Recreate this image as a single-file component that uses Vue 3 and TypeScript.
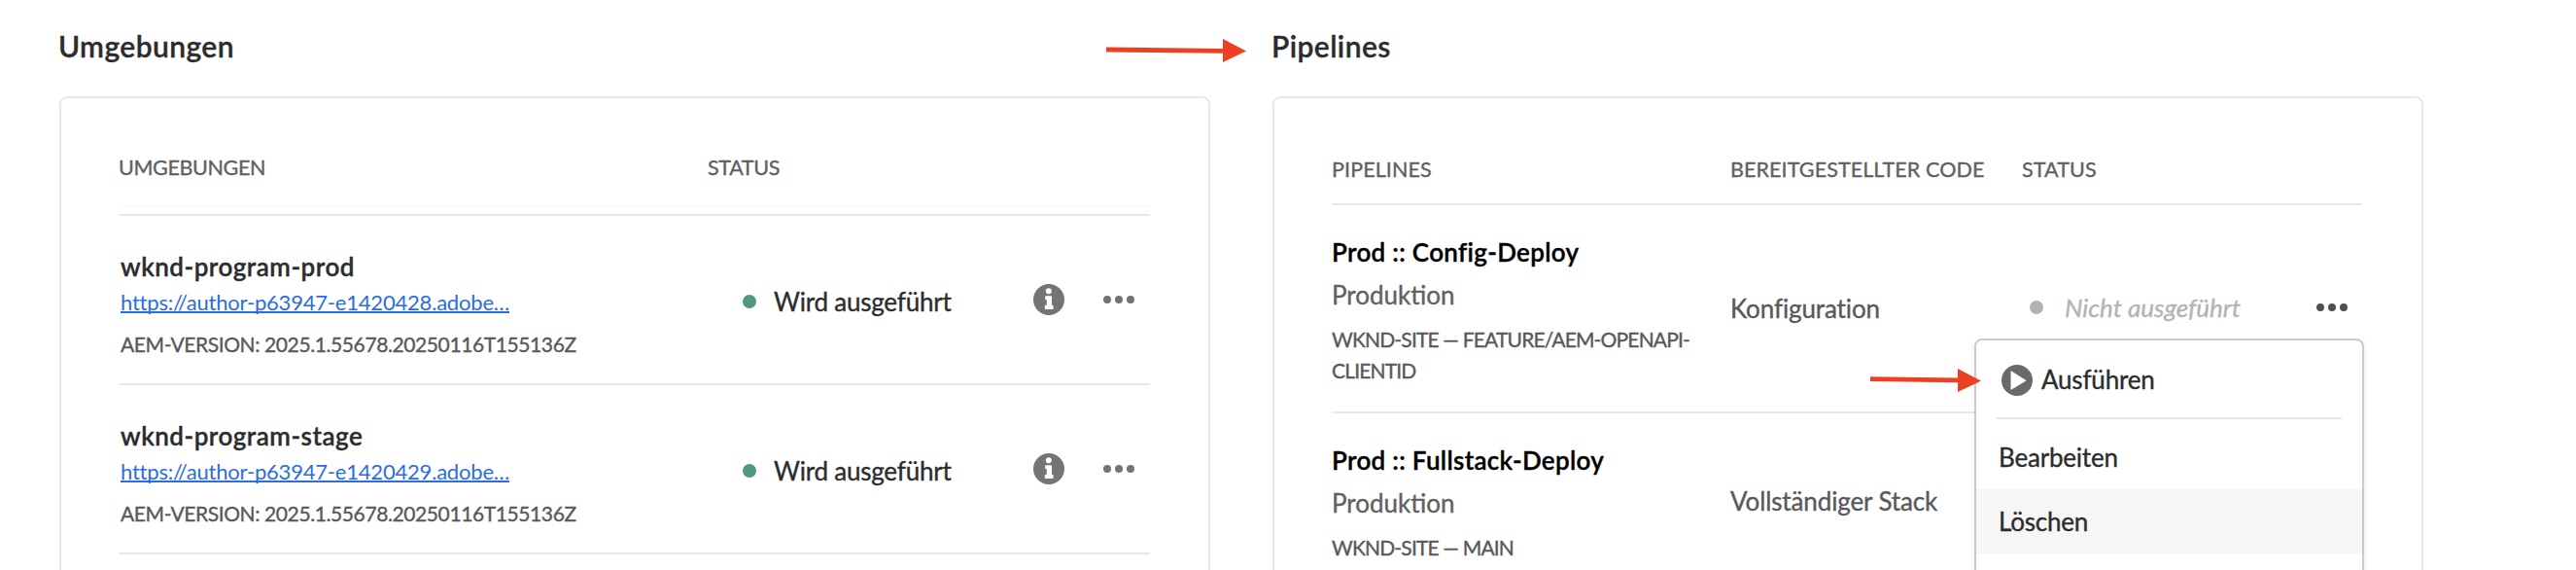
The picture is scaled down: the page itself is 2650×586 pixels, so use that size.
<script setup lang="ts">
interface Environment {
  name: string
  url: string
  version: string
  status: string
}

interface Pipeline {
  name: string
  kind: string
  branch: string
  code: string
  status: string
  menuOpen: boolean
}

const environments: Environment[] = [
  {
    name: 'wknd-program-prod',
    url: 'https://author-p63947-e1420428.adobe…',
    version: 'AEM-VERSION: 2025.1.55678.20250116T155136Z',
    status: 'Wird ausgeführt',
  },
  {
    name: 'wknd-program-stage',
    url: 'https://author-p63947-e1420429.adobe…',
    version: 'AEM-VERSION: 2025.1.55678.20250116T155136Z',
    status: 'Wird ausgeführt',
  },
]

const pipelines: Pipeline[] = [
  {
    name: 'Prod :: Config-Deploy',
    kind: 'Produktion',
    branch: 'WKND-SITE — FEATURE/AEM-OPENAPI-CLIENTID',
    code: 'Konfiguration',
    status: 'Nicht ausgeführt',
    menuOpen: true,
  },
  {
    name: 'Prod :: Fullstack-Deploy',
    kind: 'Produktion',
    branch: 'WKND-SITE — MAIN',
    code: 'Vollständiger Stack',
    status: '',
    menuOpen: false,
  },
]
</script>

<template>
  <main class="page">
    <section class="panel">
      <h2 class="title">Umgebungen</h2>
      <div class="card">
        <div class="head env-grid env-head">
          <span>UMGEBUNGEN</span>
          <span>STATUS</span>
        </div>
        <div v-for="env in environments" :key="env.name" class="env-row env-grid">
          <div class="env-info">
            <div class="env-name">{{ env.name }}</div>
            <a class="env-link">{{ env.url }}</a>
            <div class="env-version">{{ env.version }}</div>
          </div>
          <div class="env-status">
            <span class="dot running"></span>
            <span class="status-text">{{ env.status }}</span>
          </div>
          <div class="env-actions">
            <svg class="info" viewBox="0 0 32 32">
              <circle cx="16" cy="16" r="16" />
              <circle class="cut" cx="15.8" cy="7.3" r="3" />
              <path class="cut" d="M13 12.3h5.2q.8 0 .8.8v8.7h.8q.8 0 .8.8v2.6q0 .8-.8.8h-7.2q-.8 0-.8-.8v-2.6q0-.8.8-.8h1.2v-5.6H13q-.8 0-.8-.8v-2.3q0-.8.8-.8z" />
            </svg>
            <svg class="more" viewBox="0 0 32 32">
              <circle cx="4" cy="16" r="4" />
              <circle cx="16" cy="16" r="4" />
              <circle cx="28" cy="16" r="4" />
            </svg>
          </div>
        </div>
        <div class="env-end"></div>
      </div>
    </section>

    <section class="panel">
      <h2 class="title">Pipelines</h2>
      <div class="card pipe-card">
        <div class="head pipe-grid pipe-head">
          <span>PIPELINES</span>
          <span>BEREITGESTELLTER CODE</span>
          <span>STATUS</span>
        </div>
        <div v-for="pipe in pipelines" :key="pipe.name" class="pipe-row pipe-grid">
          <div class="pipe-info">
            <div class="pipe-name">{{ pipe.name }}</div>
            <div class="pipe-kind">{{ pipe.kind }}</div>
            <div class="pipe-branch">{{ pipe.branch }}</div>
          </div>
          <div class="pipe-code">{{ pipe.code }}</div>
          <div v-if="pipe.status" class="pipe-status">
            <span class="dot idle"></span>
            <span class="idle-text">{{ pipe.status }}</span>
            <svg class="more dark" viewBox="0 0 32 32">
              <circle cx="4" cy="16" r="4" />
              <circle cx="16" cy="16" r="4" />
              <circle cx="28" cy="16" r="4" />
            </svg>
          </div>
          <div v-if="pipe.menuOpen" class="menu">
            <div class="menu-item run">
              <svg class="play" viewBox="0 0 32 32">
                <circle cx="16" cy="16" r="16" />
                <path class="cut" d="M9.5 6.9v18.2q0 .9.8.4l14.6-8.7q.8-.6 0-1.1L10.3 6.5q-.8-.4-.8.4z" />
              </svg>
              Ausführen
            </div>
            <div class="divider"></div>
            <div class="menu-item">Bearbeiten</div>
            <div class="menu-item active">Löschen</div>
          </div>
        </div>
      </div>
    </section>

    <svg class="arrow arrow-title" viewBox="0 0 144 26">
      <path d="M0 9.6 120 11.1V1L144 13.5 120 25V15.8L0 14.4z" />
    </svg>
    <svg class="arrow arrow-run" viewBox="0 0 114 26">
      <path d="M0 9.3 90 10.5V1L114 13.5 90 25V15.3L0 14.1z" />
    </svg>
  </main>
</template>

<style>
body {
  margin: 0;
  background: #fff;
}
</style>

<style scoped>
.page {
  position: relative;
  box-sizing: border-box;
  width: 2650px;
  height: 586px;
  padding: 27px 0 0 61px;
  display: flex;
  gap: 64px;
  overflow: hidden;
  font-family: Lato, 'Open Sans', sans-serif;
  color: #2c2c2c;
  -webkit-text-stroke: 0.35px currentColor;
}
.panel {
  width: 1184px;
  flex: none;
}
.title {
  margin: 0 0 32px -1px;
  font-size: 30px;
  line-height: 40px;
  font-weight: 600;
  letter-spacing: 0.4px;
}
.card {
  box-sizing: border-box;
  height: 560px;
  padding: 0 60px;
  border: 2px solid #e8e8e8;
  border-radius: 8px;
}
.head {
  box-sizing: border-box;
  font-size: 21.5px;
  line-height: 30px;
  color: #606060;
}
.env-grid {
  display: grid;
  grid-template-columns: 605px 335px 1fr;
}
.env-head {
  height: 112px;
  padding-top: 56px;
  margin-bottom: 7px;
  border-bottom: 1px solid #f6f6f6;
  letter-spacing: -0.35px;
}
.env-head span:first-child {
  margin-left: -1px;
}
.env-row {
  box-sizing: border-box;
  height: 174px;
  border-top: 2px solid #e8e8e8;
  align-items: center;
}
.env-info {
  height: 172px;
  padding-left: 1px;
}
.env-name {
  padding-top: 34px;
  font-size: 26px;
  line-height: 36px;
  font-weight: 600;
  letter-spacing: 0.5px;
}
.env-link {
  display: block;
  width: max-content;
  height: 28px;
  margin-top: 2px;
  padding-top: 2px;
  font-size: 22px;
  line-height: 30px;
  letter-spacing: -0.2px;
  color: #2b6de3;
  border-bottom: 2px solid #2b6de3;
  box-sizing: border-box;
  -webkit-text-stroke-width: 0;
}
.env-version {
  margin-top: 17px;
  font-size: 21px;
  line-height: 30px;
  letter-spacing: -0.4px;
  color: #585858;
}
.env-status {
  display: flex;
  align-items: center;
  padding: 3px 0 0 36px;
}
.dot {
  width: 14px;
  height: 14px;
  border-radius: 50%;
  flex: none;
}
.running {
  background: #51997a;
}
.idle {
  background: #b3b3b3;
}
.status-text {
  margin-left: 18px;
  font-size: 26px;
  line-height: 36px;
  letter-spacing: -0.2px;
}
.env-actions {
  display: flex;
  gap: 40px;
}
.info,
.more,
.play {
  display: block;
  width: 32px;
  height: 32px;
  fill: #747474;
}
.cut {
  fill: #fff;
}
.env-end {
  border-top: 2px solid #e8e8e8;
}
.pipe-card {
  padding: 0 61px 0 59px;
}
.pipe-grid {
  display: grid;
  grid-template-columns: 410px 300px 1fr;
}
.pipe-head {
  height: 108px;
  padding-top: 58px;
  letter-spacing: 0.1px;
}
.pipe-row {
  position: relative;
  border-top: 2px solid #e8e8e8;
  align-items: center;
}
.pipe-info {
  padding: 30px 0 26px;
}
.pipe-name {
  font-size: 26px;
  line-height: 36px;
  font-weight: 600;
  letter-spacing: 0.3px;
  color: #000;
}
.pipe-kind {
  margin-top: 8px;
  font-size: 26px;
  line-height: 36px;
  color: #606060;
}
.pipe-branch {
  width: 380px;
  margin-top: 12px;
  font-size: 21px;
  line-height: 32px;
  letter-spacing: -0.83px;
  color: #585858;
}
.pipe-code {
  font-size: 26px;
  line-height: 36px;
  letter-spacing: -0.12px;
  color: #585858;
}
.pipe-status {
  display: flex;
  align-items: center;
  padding: 0 0 2px 8px;
}
.idle-text {
  margin-left: 22px;
  font-size: 26px;
  line-height: 36px;
  font-style: italic;
  color: #b3b3b3;
}
.more.dark {
  fill: #505050;
  margin: 0 15px 0 auto;
}
.menu {
  position: absolute;
  z-index: 1;
  top: 137px;
  right: -2px;
  box-sizing: border-box;
  width: 401px;
  height: 300px;
  border: 2px solid #cacaca;
  border-radius: 8px;
  background: #fff;
  box-shadow: 0 2px 6px rgba(0, 0, 0, 0.08);
}
.menu-item {
  height: 66px;
  padding-left: 23px;
  font-size: 26px;
  line-height: 67px;
  letter-spacing: -0.2px;
}
.run {
  display: flex;
  align-items: center;
  gap: 9px;
  height: 79px;
  padding: 2px 0 0 26px;
  box-sizing: border-box;
}
.play {
  fill: #6a6a6a;
}
.divider {
  height: 2px;
  margin: 0 21px 6px;
  background: #e6e6e6;
}
.active {
  background: #f6f6f6;
}
.arrow {
  position: absolute;
  z-index: 2;
  height: 26px;
  fill: #ec4025;
}
.arrow-title {
  left: 1138px;
  top: 39px;
  width: 144px;
}
.arrow-run {
  left: 1924px;
  top: 378px;
  width: 114px;
}
</style>
